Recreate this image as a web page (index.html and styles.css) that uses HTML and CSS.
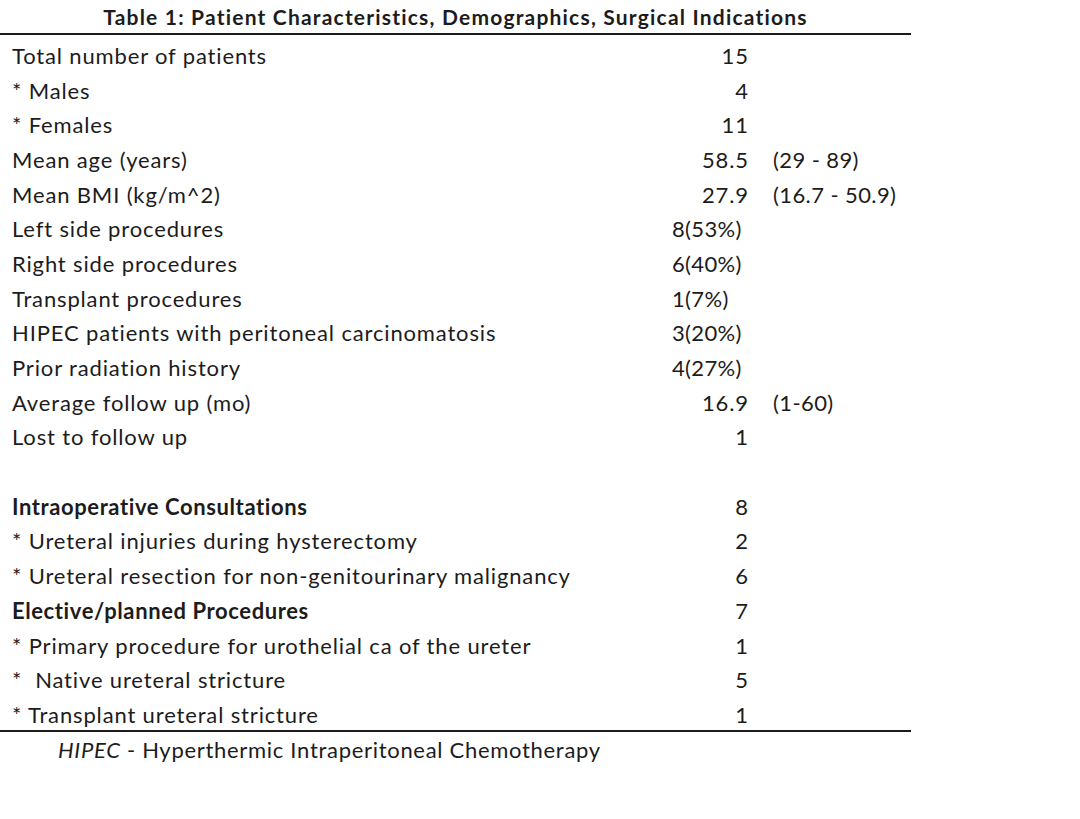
FILE: index.html
```html
<!DOCTYPE html>
<html>
<head>
<meta charset="utf-8">
<link rel="stylesheet" href="styles.css">
</head>
<body>
<div class="sheet">
  <div class="title">Table 1: Patient Characteristics, Demographics, Surgical Indications</div>
  <div class="grid">
    <div class="lab">Total number of patients</div><div class="num">15</div><div class="rng"></div>
    <div class="lab">* Males</div><div class="num">4</div><div class="rng"></div>
    <div class="lab">* Females</div><div class="num">11</div><div class="rng"></div>
    <div class="lab">Mean age (years)</div><div class="num">58.5</div><div class="rng">(29 - 89)</div>
    <div class="lab">Mean BMI (kg/m^2)</div><div class="num">27.9</div><div class="rng">(16.7 - 50.9)</div>
    <div class="lab">Left side procedures</div><div class="pct">8(53%)</div><div class="rng"></div>
    <div class="lab">Right side procedures</div><div class="pct">6(40%)</div><div class="rng"></div>
    <div class="lab">Transplant procedures</div><div class="pct">1(7%)</div><div class="rng"></div>
    <div class="lab">HIPEC patients with peritoneal carcinomatosis</div><div class="pct">3(20%)</div><div class="rng"></div>
    <div class="lab">Prior radiation history</div><div class="pct">4(27%)</div><div class="rng"></div>
    <div class="lab">Average follow up (mo)</div><div class="num">16.9</div><div class="rng">(1-60)</div>
    <div class="lab">Lost to follow up</div><div class="num">1</div><div class="rng"></div>
    <div class="lab">&nbsp;</div><div class="num"></div><div class="rng"></div>
    <div class="lab bold">Intraoperative Consultations</div><div class="num">8</div><div class="rng"></div>
    <div class="lab">* Ureteral injuries during hysterectomy</div><div class="num">2</div><div class="rng"></div>
    <div class="lab">* Ureteral resection for non-genitourinary malignancy</div><div class="num">6</div><div class="rng"></div>
    <div class="lab bold">Elective/planned Procedures</div><div class="num">7</div><div class="rng"></div>
    <div class="lab">* Primary procedure for urothelial ca of the ureter</div><div class="num">1</div><div class="rng"></div>
    <div class="lab">*&nbsp;&nbsp;Native ureteral stricture</div><div class="num">5</div><div class="rng"></div>
    <div class="lab">* Transplant ureteral stricture</div><div class="num">1</div><div class="rng"></div>
  </div>
  <div class="note"><em>HIPEC</em> - Hyperthermic Intraperitoneal Chemotherapy</div>
</div>
</body>
</html>
```

FILE: styles.css
```css
html, body {
  margin: 0;
  padding: 0;
  background: #ffffff;
}
.sheet {
  width: 911px;
  font-family: "Lato", "Liberation Sans", sans-serif;
  color: #1c1c1c;
  font-size: 22px;
  letter-spacing: 0.85px;
}
.title {
  height: 33px;
  line-height: 33px;
  border-bottom: 2px solid #1c1c1c;
  text-align: center;
  font-weight: bold;
  font-size: 21px;
  letter-spacing: 1.2px;
}
.grid {
  display: grid;
  grid-template-columns: 672px 76px 1fr;
  grid-auto-rows: 34.7px;
  align-items: center;
  align-content: start;
  border-bottom: 2px solid #1c1c1c;
  padding-top: 3px;
  height: 697px;
  box-sizing: border-box;
}
.lab {
  padding-left: 12px;
  white-space: nowrap;
}
.bold {
  font-weight: bold;
  letter-spacing: 0.6px;
}
.num {
  text-align: right;
  margin-right: -0.85px;
}
.pct {
  text-align: left;
  letter-spacing: 0.35px;
}
.rng {
  padding-left: 25px;
  white-space: nowrap;
  letter-spacing: 0.4px;
}
.note {
  padding-left: 58px;
  height: 38px;
  line-height: 36px;
  letter-spacing: 0.7px;
}
```
